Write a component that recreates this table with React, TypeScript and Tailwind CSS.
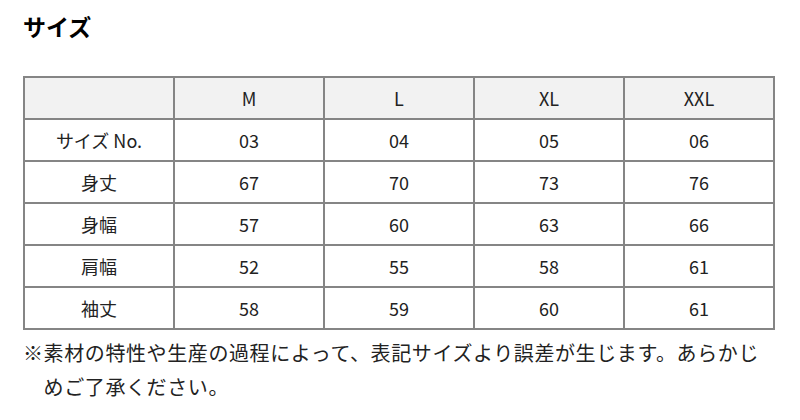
const sizes = ['M', 'L', 'XL', 'XXL'];

const rows: { label: string; values: string[] }[] = [
  { label: 'サイズ No.', values: ['03', '04', '05', '06'] },
  { label: '身丈', values: ['67', '70', '73', '76'] },
  { label: '身幅', values: ['57', '60', '63', '66'] },
  { label: '肩幅', values: ['52', '55', '58', '61'] },
  { label: '袖丈', values: ['58', '59', '60', '61'] },
];

const cell = 'h-[42px] w-[150px] border-2 border-[#858585] p-0 text-center align-middle font-normal';

export default function App() {
  return (
    <div
      className="w-[800px] h-[420px] bg-white text-[#222] px-[23px] pt-[11px]"
      style={{ fontFamily: '"Noto Sans CJK JP", "Noto Sans", sans-serif' }}
    >
      {/* Title */}
      <h2 className="text-[23px] font-bold leading-[30px] text-black">サイズ</h2>

      {/* Size table */}
      <table className="mt-[35px] border-collapse table-fixed text-[18px] leading-none">
        <thead>
          <tr className="bg-[#f2f2f2]">
            <th className={cell} />
            {sizes.map((s) => (
              <th key={s} className={cell}>
                {s}
              </th>
            ))}
          </tr>
        </thead>
        <tbody>
          {rows.map((r) => (
            <tr key={r.label}>
              <td className={cell}>{r.label}</td>
              {r.values.map((v, i) => (
                <td key={i} className={cell}>
                  {v}
                </td>
              ))}
            </tr>
          ))}
        </tbody>
      </table>

      {/* Note */}
      <p className="mt-[6px] text-[20px] leading-[34px] tracking-[0.6px] pl-[20.6px] -indent-[20.6px]">
        ※素材の特性や生産の過程によって、表記サイズより誤差が生じます。あらかじめご了承ください。
      </p>
    </div>
  );
}
